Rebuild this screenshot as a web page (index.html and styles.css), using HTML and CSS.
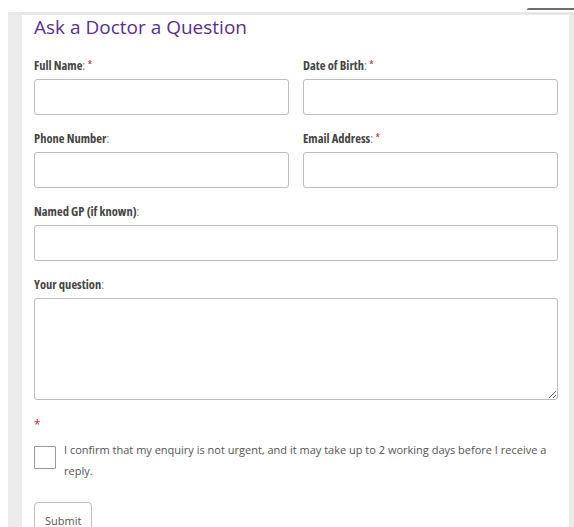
FILE: index.html
```html
<!DOCTYPE html>
<html lang="en">
<head>
<meta charset="utf-8">
<title>Ask a Doctor a Question</title>
<link rel="stylesheet" href="styles.css">
</head>
<body>
  <div class="topbar"><span class="tab-edge"></span></div>
  <div class="frame">
    <div class="gutter gutter-left"></div>
    <main class="panel">
      <h1 class="title">Ask a Doctor a Question</h1>
      <form class="ask-form">
        <div class="grid-2">
          <div class="field">
            <label class="label" for="full-name">Full Name<span class="colon">:</span> <span class="req">*</span></label>
            <input class="control" id="full-name" type="text">
          </div>
          <div class="field">
            <label class="label" for="dob">Date of Birth<span class="colon">:</span> <span class="req">*</span></label>
            <input class="control" id="dob" type="text">
          </div>
          <div class="field">
            <label class="label" for="phone">Phone Number<span class="colon">:</span></label>
            <input class="control" id="phone" type="text">
          </div>
          <div class="field">
            <label class="label" for="email">Email Address<span class="colon">:</span> <span class="req">*</span></label>
            <input class="control" id="email" type="text">
          </div>
        </div>
        <div class="field">
          <label class="label" for="gp">Named GP (if known)<span class="colon">:</span></label>
          <input class="control" id="gp" type="text">
        </div>
        <div class="field">
          <label class="label" for="question">Your question<span class="colon">:</span></label>
          <textarea class="control control-area" id="question"></textarea>
        </div>
        <div class="req req-line">*</div>
        <label class="confirm">
          <input class="checkbox" type="checkbox">
          <span class="confirm-text">I confirm that my enquiry is not urgent, and it may take up to 2 working days before I receive a reply.</span>
        </label>
        <button class="submit" type="button">Submit</button>
      </form>
    </main>
    <div class="gutter gutter-right"></div>
  </div>
</body>
</html>
```
FILE: styles.css
```css
html, body {
  margin: 0;
  padding: 0;
  background: #ffffff;
  overflow: hidden;
}

body {
  font-family: "Open Sans", "Liberation Sans", sans-serif;
  color: #555;
  height: 527px;
}

.topbar {
  height: 12px;
  display: flex;
  justify-content: flex-end;
  background: #fff;
}

.tab-edge {
  width: 47px;
  height: 2px;
  margin-top: 8px;
  background: #6e6e6e;
  border-radius: 2px 0 0 0;
}

.frame {
  margin-left: 8px;
  border-top: 3px solid #e8e8e8;
  display: flex;
  height: 512px;
}

.gutter {
  background: #ececec;
  flex: none;
}

.gutter-left { width: 14px; }
.gutter-right { width: 5px; }

.panel {
  flex: 1;
  background: #fff;
  padding: 0 11px 0 12px;
  min-width: 0;
}

.title {
  margin: 1px 0 0;
  font-size: 19px;
  line-height: 22px;
  font-weight: 400;
  color: #5b2f8e;
}

.ask-form {
  margin-top: 20px;
  display: flex;
  flex-direction: column;
}

.grid-2 {
  display: grid;
  grid-template-columns: 1fr 1fr;
  column-gap: 14px;
}

.field {
  display: flex;
  flex-direction: column;
  margin-bottom: 16px;
}

.label {
  font-size: 12.5px;
  line-height: 16px;
  font-weight: 700;
  font-stretch: 75%;
  color: #444;
  margin-bottom: 5px;
}

.colon {
  font-weight: 400;
  color: #777;
}

.req {
  color: #c0392b;
  font-weight: 400;
}

.control {
  box-sizing: border-box;
  height: 36px;
  width: 100%;
  margin: 0;
  border: 1px solid #bdbdbd;
  border-radius: 3px;
  background: #fff;
  font: inherit;
}

.control-area {
  height: 102px;
  resize: vertical;
}

.req-line {
  margin-top: 1px;
  font-size: 12px;
  line-height: 16px;
}

.confirm {
  margin-top: 7px;
  display: flex;
  align-items: flex-start;
  gap: 8px;
}

.checkbox {
  appearance: none;
  -webkit-appearance: none;
  flex: none;
  width: 22px;
  height: 23px;
  margin: 6px 0 0;
  border: 1px solid #9a9a9a;
  border-radius: 1px;
  background: #fff;
}

.confirm-text {
  font-size: 11px;
  line-height: 20.5px;
  color: #555;
}

.submit {
  align-self: flex-start;
  margin-top: 21px;
  height: 36px;
  padding: 0 10px;
  border: 1px solid #bdbdbd;
  border-radius: 4px;
  background: #fff;
  font-family: inherit;
  font-size: 11px;
  color: #555;
}
```
